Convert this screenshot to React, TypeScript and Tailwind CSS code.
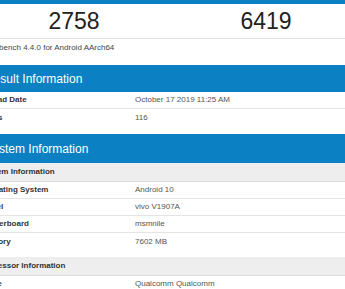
import React from 'react';

const Row = ({ label, value, last }: { label: string; value: string; last?: boolean }) => (
  <div className={`flex h-[17px] items-center ${last ? '' : 'border-b border-[#e4e4e4]'}`}>
    <div className="w-[157px] shrink-0 pl-[2px] font-bold text-[#333]">{label}</div>
    <div className="text-[#555]">{value}</div>
  </div>
);

const Header = ({ title, h }: { title: string; h: string }) => (
  <div className={`flex items-center bg-[#0b80c3] pl-[7px] text-[12px] text-white ${h}`}>{title}</div>
);

const SubHeader = ({ title, h }: { title: string; h: string }) => (
  <div className={`flex items-center border-b border-[#dcdcdc] bg-[#eeeeee] pl-[2px] font-bold text-[#333] ${h}`}>
    {title}
  </div>
);

const App = () => {
  return (
    <div className="h-[289px] w-[345px] overflow-hidden bg-white font-['Liberation_Sans',Arial,sans-serif] text-[8px]">
      <div className="ml-[-22px] w-[384px]">
        <div className="h-[4px] bg-[#0b80c3]" />
        <div className="grid h-[35px] grid-cols-2 items-center border-b border-[#e2e2e2] text-[23px] text-[#222]">
          <div className="text-center">2758</div>
          <div className="text-center">6419</div>
        </div>
        <div className="mb-[8px] h-[18px] pl-[2px] leading-[18px] text-[#444]">Geekbench 4.4.0 for Android AArch64</div>

        <Header title="Result Information" h="h-[27px]" />
        <div className="mb-[8px]">
          <Row label="Upload Date" value="October 17 2019 11:25 AM" />
          <Row label="Views" value="116" last />
        </div>

        <Header title="System Information" h="h-[29px]" />
        <SubHeader title="System Information" h="h-[19px]" />
        <div className="mb-[7px]">
          <Row label="Operating System" value="Android 10" />
          <Row label="Model" value="vivo V1907A" />
          <Row label="Motherboard" value="msmnile" />
          <Row label="Memory" value="7602 MB" last />
        </div>
        <SubHeader title="Processor Information" h="h-[19px]" />
        <Row label="Name" value="Qualcomm Qualcomm" />
      </div>
    </div>
  );
};

export default App;
